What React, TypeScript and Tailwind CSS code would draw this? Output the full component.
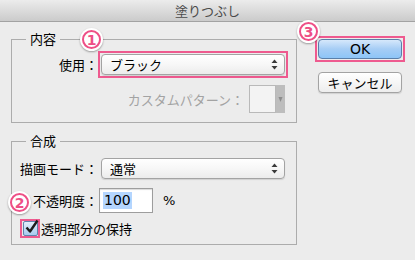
import React from 'react';

const Badge: React.FC<{ n: string; className: string }> = ({ n, className }) => (
  <div
    className={`absolute w-[23px] h-[23px] rounded-full bg-white shadow-[0_1px_2px_rgba(0,0,0,0.35)] flex items-center justify-center ${className}`}
  >
    <div className="w-[19px] h-[19px] rounded-full border-2 border-[#ee4f86] flex items-center justify-center text-[#ee4f86] text-[14px] font-bold leading-none font-['DejaVu_Sans',sans-serif]">
      {n}
    </div>
  </div>
);

const Arrows: React.FC = () => (
  <svg width="7" height="11" viewBox="0 0 7 11" className="shrink-0">
    <path d="M3.5 0.5 L6.5 4 L0.5 4 Z" fill="#3a3a3a" />
    <path d="M3.5 10.5 L6.5 7 L0.5 7 Z" fill="#3a3a3a" />
  </svg>
);

const Select: React.FC<{ value: string; className?: string }> = ({ value, className = '' }) => (
  <div
    className={`h-[21px] w-[184px] rounded-[4px] border border-[#a3a3a3] bg-linear-to-b from-white via-[#f7f7f7] to-[#ececec] shadow-[0_1px_1px_rgba(0,0,0,0.12)] flex items-center justify-between pl-[8px] pr-[6px] ${className}`}
  >
    <span className="leading-[19px]">{value}</span>
    <Arrows />
  </div>
);

// Group box: title row draws the top edge, body draws the rest
const Group: React.FC<{ title: string; className: string; bodyClass: string; children: React.ReactNode }> = ({
  title,
  className,
  bodyClass,
  children,
}) => (
  <div className={className}>
    <div className="flex h-[16px]">
      <div className="w-[15px] h-[8px] self-end border-l border-t border-[#acacac]" />
      <span className="px-[4px] leading-[16px]">{title}</span>
      <div className="flex-1 h-[8px] self-end border-r border-t border-[#acacac]" />
    </div>
    <div className={`border-l border-r border-b border-[#acacac] ${bodyClass}`}>{children}</div>
  </div>
);

export default function App() {
  return (
    <div className="relative w-[415px] h-[260px] overflow-hidden bg-[#ececec] text-[13px] text-black font-['Noto_Sans_CJK_JP',sans-serif]">
      {/* Title bar */}
      <div className="h-[22px] border-b border-[#a2a2a2] bg-linear-to-b from-[#ececec] to-[#cbcbcb] flex items-center justify-center text-[#4a4a4a] leading-[20px]">
        塗りつぶし
      </div>

      <div className="flex pl-[11px]">
        {/* Left column */}
        <div className="w-[286px]">
          <Group title="内容" className="mt-[9px]" bodyClass="pt-[4px] pr-[7px] pb-[9px]">
            <div className="flex items-center">
              <div className="w-[86px] text-right leading-[19px]">使用：</div>
              <div className="w-[190px] border-2 border-[#ee5a8f] p-px">
                <Select value="ブラック" />
              </div>
            </div>
            <div className="mt-[7px] pr-[4px] flex items-center justify-end">
              <span className="text-[#a3a3a3] leading-[19px]">カスタムパターン：</span>
              <div className="ml-[5px] h-[28px] w-[36px] flex">
                <div className="w-[27px] border border-[#b9b9b9] bg-[#f3f3f3]" />
                <div className="w-[9px] bg-[#bdbdbd] flex justify-center pt-[11px]">
                  <svg width="5" height="7" viewBox="0 0 5 7">
                    <path d="M0.5 1 L4.5 1 L2.5 6 Z" fill="#8c8c8c" />
                  </svg>
                </div>
              </div>
            </div>
          </Group>

          <Group title="合成" className="mt-[10px]" bodyClass="pt-[9px] pb-[6px]">
            <div className="flex items-center">
              <div className="w-[86px] text-right leading-[19px]">描画モード：</div>
              <Select value="通常" className="ml-[3px]" />
            </div>
            <div className="mt-[9px] flex items-center">
              <div className="w-[86px] text-right leading-[19px]">不透明度：</div>
              <div className="ml-px h-[25px] w-[54px] border border-[#9d9d9d] bg-white shadow-[inset_0_1px_1px_rgba(0,0,0,0.15)] flex items-center pl-[3px]">
                <span className="bg-[#b4d5fe] px-px leading-[17px] text-[14px] font-['DejaVu_Sans',sans-serif]">100</span>
              </div>
              <span className="ml-[10px] font-['DejaVu_Sans',sans-serif] text-[13px]">%</span>
            </div>
            <div className="mt-[6px] flex items-center">
              <div className="ml-[8px] w-[20px] h-[19px] border-2 border-[#ee5a8f] flex items-center justify-center">
                <div className="relative w-[15px] h-[15px] rounded-[2px] border border-[#5f84ae] bg-linear-to-b from-[#e3eefb] to-[#a8cbef]">
                  <svg width="16" height="16" viewBox="0 0 16 16" className="absolute -top-[3px] left-0">
                    <path d="M2.5 8.5 L6 12.5 L13.5 1.5" fill="none" stroke="#1c1c1c" strokeWidth="2.4" strokeLinejoin="round" />
                  </svg>
                </div>
              </div>
              <span className="ml-px leading-[19px]">透明部分の保持</span>
            </div>
          </Group>
        </div>

        {/* Right column */}
        <div className="ml-[18px] mt-[14px] flex flex-col">
          <div className="w-[90px] h-[26px] border-2 border-[#ee5a8f] p-px">
            <div className="h-[20px] rounded-[4px] border border-[#5a7fa9] bg-linear-to-b from-[#d6e8fb] via-[#a6cdf5] to-[#8dc5f7] flex items-center justify-center font-['DejaVu_Sans',sans-serif] text-[14px] leading-none">
              OK
            </div>
          </div>
          <div className="ml-[3px] mt-[10px] w-[84px] h-[21px] rounded-[4px] border border-[#a3a3a3] bg-linear-to-b from-white to-[#ededed] shadow-[0_1px_1px_rgba(0,0,0,0.12)] flex items-center justify-center leading-[19px]">
            キャンセル
          </div>
        </div>
      </div>

      <Badge n="1" className="left-[80px] top-[28px]" />
      <Badge n="2" className="left-[8px] top-[191px]" />
      <Badge n="3" className="left-[297px] top-[20px]" />
    </div>
  );
}
